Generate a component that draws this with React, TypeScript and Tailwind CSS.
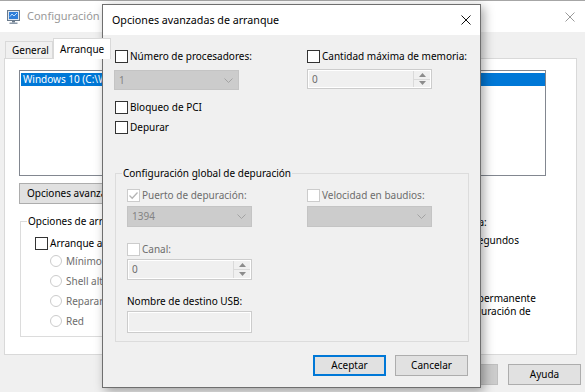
import type { ReactNode } from "react";

type BoxProps = { disabled?: boolean; checked?: boolean };

function CheckBox({ disabled, checked }: BoxProps) {
  return (
    <span
      className={
        disabled
          ? "flex h-[13px] w-[13px] shrink-0 items-center justify-center border border-[#cccccc] bg-white"
          : "flex h-[13px] w-[13px] shrink-0 items-center justify-center border border-[#333333] bg-white"
      }
    >
      {checked && (
        <svg width="11" height="11" viewBox="0 0 11 11">
          <polyline points="1.5,5.5 4.2,8.2 9.5,2.5" fill="none" stroke="#b5b5b5" strokeWidth="1.3" />
        </svg>
      )}
    </span>
  );
}

function CheckRow({ label, disabled, checked }: BoxProps & { label: string }) {
  return (
    <div className="flex h-[13px] items-center gap-[2px] whitespace-nowrap">
      <CheckBox disabled={disabled} checked={checked} />
      <span className={disabled ? "leading-[13px] text-[#6d6d6d]" : "leading-[13px]"}>{label}</span>
    </div>
  );
}

function Chevron() {
  return (
    <svg width="9" height="5" viewBox="0 0 9 5" className="ml-auto mr-[5px]">
      <polyline points="0.5,0.5 4.5,4.5 8.5,0.5" fill="none" stroke="#a3a3a3" strokeWidth="1" />
    </svg>
  );
}

function Combo({ value, className }: { value?: string; className: string }) {
  return (
    <div className={`flex w-[125px] items-center border border-[#c4c4c4] bg-[#cccccc] text-[#838383] ${className}`}>
      <span className="pl-[4px]">{value}</span>
      <Chevron />
    </div>
  );
}

function Spin({ value, className }: { value: string; className: string }) {
  return (
    <div className={`flex w-[125px] border border-[#cccccc] bg-[#f0f0f0] shadow-[inset_0_0_0_1px_#ffffff] ${className}`}>
      <span className="flex flex-1 items-center pl-[4px] text-[#6d6d6d]">{value}</span>
      <div className="my-[1px] mr-[1px] flex w-[17px] flex-col border-l border-[#dadada]">
        <div className="flex flex-1 items-center justify-center border-b border-[#dadada]">
          <svg width="7" height="4" viewBox="0 0 7 4">
            <polygon points="0,4 3.5,0 7,4" fill="#8c8c8c" />
          </svg>
        </div>
        <div className="flex flex-1 items-center justify-center">
          <svg width="7" height="4" viewBox="0 0 7 4">
            <polygon points="0,0 3.5,4 7,0" fill="#8c8c8c" />
          </svg>
        </div>
      </div>
    </div>
  );
}

function Radio({ label }: { label: string }) {
  return (
    <div className="flex h-[20px] items-center gap-[4px] whitespace-nowrap text-[#6d6d6d]">
      <span className="h-[12px] w-[12px] rounded-full border border-[#cccccc] bg-white" />
      {label}
    </div>
  );
}

function Button({ children, className }: { children: ReactNode; className: string }) {
  return (
    <div className={`flex h-[21px] w-[73px] items-center justify-center whitespace-nowrap ${className}`}>{children}</div>
  );
}

function CloseIcon({ color }: { color: string }) {
  return (
    <svg width="10" height="10" viewBox="0 0 10 10">
      <path d="M0.5 0.5 L9.5 9.5 M9.5 0.5 L0.5 9.5" stroke={color} strokeWidth="1" />
    </svg>
  );
}

function MsconfigIcon() {
  return (
    <svg width="13" height="14" viewBox="0 0 13 14">
      <rect x="0.5" y="0.5" width="12" height="10" fill="#dfe6ee" stroke="#6b7b8c" />
      <rect x="2" y="2" width="9" height="7" fill="#2f7ed8" />
      <path d="M3 6.5 L5 4 L7 6 L10 3" stroke="#bfe0ff" strokeWidth="1" fill="none" />
      <rect x="5" y="11" width="3" height="1.5" fill="#6b7b8c" />
      <rect x="2.5" y="12.5" width="8" height="1.5" fill="#8a98a8" />
    </svg>
  );
}

function MsconfigWindow() {
  return (
    <div className="flex h-full flex-col">
      <div className="flex h-[32px] shrink-0 items-center border-t border-[#a6a6a6] bg-white pl-[7px] pr-[10px]">
        <MsconfigIcon />
        <span className="ml-[7px] text-[11px] text-[#999999]">Configuración del sistema</span>
        <span className="ml-auto">
          <CloseIcon color="#9a9a9a" />
        </span>
      </div>

      <div className="px-[4px] pt-[6px]">
        <div className="flex h-[20px] items-end pl-[1px]">
          <div className="flex h-[17px] w-[48px] items-center border border-b-0 border-[#d9d9d9] bg-[#f0f0f0] pl-[6px]">
            General
          </div>
          <div className="relative z-10 mb-[-1px] flex h-[21px] w-[58px] items-center border border-b-0 border-[#d9d9d9] bg-white pl-[6px]">
            Arranque
          </div>
        </div>

        <div className="h-[297px] w-[573px] border border-[#d9d9d9] bg-white pl-[14px] pt-[11px]">
          <div className="h-[106px] w-[527px] border border-[#828790] pl-[1px] pt-[2px]">
            <div className="h-[13px] w-[524px] overflow-hidden whitespace-nowrap bg-[#0078d7] pl-[2px] leading-[13px] text-white">
              Windows 10 (C:\Windows) : Sistema operativo actual; predeterminado
            </div>
          </div>

          <Button className="mt-[7px] w-[120px] justify-start border border-[#adadad] bg-[#e1e1e1] pl-[7px]">
            Opciones avanzadas...
          </Button>

          <div className="mt-[9px] flex">
            <fieldset className="ml-[1px] w-[250px] border border-[#dcdcdc] pb-[5px] pl-[14px] pt-[8px]">
              <legend className="ml-[-8px] px-[1px] leading-[16px]">Opciones de arranque</legend>
              <CheckRow label="Arranque a prueba de errores" />
              <div className="ml-[15px] mt-[1px]">
                <Radio label="Mínimo" />
                <Radio label="Shell alternativo" />
                <Radio label="Reparar Active Directory" />
                <Radio label="Red" />
              </div>
            </fieldset>

            <div className="ml-[130px] flex flex-col whitespace-nowrap">
              <div className="mt-[1px] leading-[16px]">Tiempo de espera:</div>
              <div className="flex items-center gap-[4px]">
                <div className="h-[21px] w-[69px] border border-[#7a7a7a] pl-[4px] leading-[19px]">30</div>
                <span>segundos</span>
              </div>
              <div className="ml-[1px] mt-[41px] flex gap-[3px] leading-[13px]">
                <span className="mt-[1px]">
                  <CheckBox />
                </span>
                <span>
                  Convertir en permanente
                  <br />
                  toda la configuración de
                  <br />
                  arranque
                </span>
              </div>
            </div>
          </div>
        </div>

        <div className="mt-[9px] flex justify-end gap-[10px]">
          <Button className="h-[20px] w-[72px] border border-[#adadad] bg-[#e1e1e1]">Aceptar</Button>
          <Button className="h-[20px] w-[72px] border border-[#adadad] bg-[#e1e1e1]">Cancelar</Button>
          <Button className="h-[20px] w-[72px] border border-[#bfbfbf] bg-[#cccccc] text-[#838383]">Aplicar</Button>
          <Button className="h-[20px] w-[72px] border border-[#adadad] bg-[#e1e1e1]">Ayuda</Button>
        </div>
      </div>
    </div>
  );
}

function AdvancedBootDialog() {
  return (
    <div className="absolute left-[102px] top-[4px] flex h-[384px] w-[379px] flex-col border border-[#6f6f6f] bg-[#f0f0f0] shadow-[3px_3px_10px_rgba(0,0,0,0.35)]">
      <div className="flex h-[30px] shrink-0 items-center bg-white pl-[9px] pr-[9px]">
        <span className="text-[10.7px]">Opciones avanzadas de arranque</span>
        <span className="ml-auto">
          <CloseIcon color="#111111" />
        </span>
      </div>

      <div className="flex flex-col pl-[12px] pr-[11px] pt-[15px]">
        <div className="grid grid-cols-[192px_1fr]">
          <div>
            <CheckRow label="Número de procesadores:" />
            <Combo value="1" className="ml-[-1px] mt-[7px] h-[20px]" />
          </div>
          <div>
            <CheckRow label="Cantidad máxima de memoria:" />
            <Spin value="0" className="mt-[6px] h-[20px]" />
          </div>
        </div>

        <div className="mt-[11px]">
          <CheckRow label="Bloqueo de PCI" />
        </div>
        <div className="mt-[7px]">
          <CheckRow label="Depurar" />
        </div>

        <fieldset className="mt-[31px] border border-[#dcdcdc] pb-[8px] pl-[11px] pt-[8px]">
          <legend className="ml-[-5px] px-[1px] leading-[16px]">Configuración global de depuración</legend>
          <div className="grid grid-cols-[180px_1fr]">
            <div>
              <CheckRow label="Puerto de depuración:" disabled checked />
              <Combo value="1394" className="mt-[4px] h-[21px]" />
              <div className="mt-[16px]">
                <CheckRow label="Canal:" disabled />
              </div>
              <Spin value="0" className="mt-[3px] h-[21px]" />
              <div className="mt-[13px] leading-[16px]">Nombre de destino USB:</div>
              <div className="mt-[2px] h-[22px] w-[125px] border border-[#cccccc] bg-[#f0f0f0] shadow-[inset_0_0_0_1px_#ffffff]" />
            </div>
            <div>
              <CheckRow label="Velocidad en baudios:" disabled />
              <Combo className="mt-[4px] h-[21px]" />
            </div>
          </div>
        </fieldset>

        <div className="mr-[1px] mt-[13px] flex justify-end gap-[9px]">
          <Button className="border-2 border-[#0078d7] bg-[#e1e1e1]">Aceptar</Button>
          <Button className="border border-[#adadad] bg-[#e1e1e1]">Cancelar</Button>
        </div>
      </div>
    </div>
  );
}

export default function App() {
  return (
    <div className="relative h-[392px] w-[585px] overflow-hidden bg-[#f0f0f0] font-['Segoe_UI','Noto_Sans',sans-serif] text-[10px] text-black">
      <MsconfigWindow />
      <AdvancedBootDialog />
    </div>
  );
}
